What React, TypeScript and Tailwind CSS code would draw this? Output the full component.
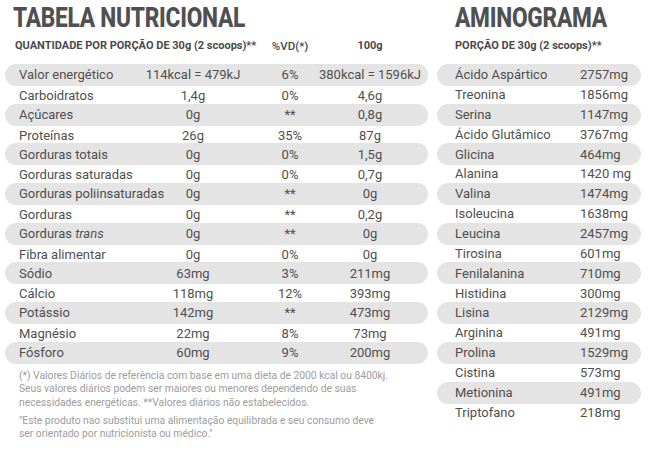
const font = { fontFamily: "Roboto, 'Liberation Sans', sans-serif" };

type NutRow = { label: React.ReactNode; portion: string; vd: string; per100: string };

const nutrition: NutRow[] = [
  { label: "Valor energético", portion: "114kcal = 479kJ", vd: "6%", per100: "380kcal = 1596kJ" },
  { label: "Carboidratos", portion: "1,4g", vd: "0%", per100: "4,6g" },
  { label: "Açúcares", portion: "0g", vd: "**", per100: "0,8g" },
  { label: "Proteínas", portion: "26g", vd: "35%", per100: "87g" },
  { label: "Gorduras totais", portion: "0g", vd: "0%", per100: "1,5g" },
  { label: "Gorduras saturadas", portion: "0g", vd: "0%", per100: "0,7g" },
  { label: "Gorduras poliinsaturadas", portion: "0g", vd: "**", per100: "0g" },
  { label: "Gorduras", portion: "0g", vd: "**", per100: "0,2g" },
  {
    label: (
      <>
        Gorduras <i>trans</i>
      </>
    ),
    portion: "0g",
    vd: "**",
    per100: "0g",
  },
  { label: "Fibra alimentar", portion: "0g", vd: "0%", per100: "0g" },
  { label: "Sódio", portion: "63mg", vd: "3%", per100: "211mg" },
  { label: "Cálcio", portion: "118mg", vd: "12%", per100: "393mg" },
  { label: "Potássio", portion: "142mg", vd: "**", per100: "473mg" },
  { label: "Magnésio", portion: "22mg", vd: "8%", per100: "73mg" },
  { label: "Fósforo", portion: "60mg", vd: "9%", per100: "200mg" },
];

const aminos: [string, string][] = [
  ["Ácido Aspártico", "2757mg"],
  ["Treonina", "1856mg"],
  ["Serina", "1147mg"],
  ["Ácido Glutâmico", "3767mg"],
  ["Glicina", "464mg"],
  ["Alanina", "1420 mg"],
  ["Valina", "1474mg"],
  ["Isoleucina", "1638mg"],
  ["Leucina", "2457mg"],
  ["Tirosina", "601mg"],
  ["Fenilalanina", "710mg"],
  ["Histidina", "300mg"],
  ["Lisina", "2129mg"],
  ["Arginina", "491mg"],
  ["Prolina", "1529mg"],
  ["Cistina", "573mg"],
  ["Metionina", "491mg"],
  ["Triptofano", "218mg"],
];

function Cell({ children }: { children: React.ReactNode }) {
  return <div className="flex justify-center whitespace-nowrap">{children}</div>;
}

function NutritionTable() {
  return (
    <div className="ml-[5px] w-[423px]">
      <div className="pl-[8px] pt-[3px] h-[34px]">
        <h1 className="inline-block origin-left scale-x-[0.84] whitespace-nowrap text-[27px] leading-[30px] font-extrabold tracking-[-0.3px] text-[#505052]">
          TABELA NUTRICIONAL
        </h1>
      </div>
      <div className="grid grid-cols-[136px_104px_90px_70px] items-center h-[30px] pb-[5px] text-[11px] font-bold text-[#4a4a4a]">
        <div className="pl-[10px] whitespace-nowrap">QUANTIDADE POR PORÇÃO DE 30g (2 scoops)**</div>
        <div />
        <Cell>
          <span className="text-[11.5px] font-medium">%VD(*)</span>
        </Cell>
        <Cell>100g</Cell>
      </div>
      <div className="text-[13px] text-[#4f4f4f]">
        {nutrition.map((r, i) => (
          <div
            key={i}
            className={
              i % 2 === 0
                ? "grid grid-cols-[136px_104px_90px_70px] items-center h-[22px] rounded-full bg-[#e4e4e4]"
                : "grid grid-cols-[136px_104px_90px_70px] items-center h-[17.7px]"
            }
          >
            <div className="pl-[14px] whitespace-nowrap">{r.label}</div>
            <Cell>{r.portion}</Cell>
            <Cell>{r.vd}</Cell>
            <Cell>{r.per100}</Cell>
          </div>
        ))}
      </div>
      <div className="pl-[14px] pt-[5px] text-[10.3px] leading-[13.5px] text-[#9d9d9d] whitespace-nowrap">
        <p>
          (*) Valores Diários de referência com base em uma dieta de 2000 kcal ou 8400kj.
          <br />
          Seus valores diários podem ser maiores ou menores dependendo de suas
          <br />
          necessidades energéticas. **Valores diários não estabelecidos.
        </p>
        <p className="mt-[4.5px]">
          "Este produto nao substitui uma alimentação equilibrada e seu consumo deve
          <br />
          ser orientado por nutricionista ou médico."
        </p>
      </div>
    </div>
  );
}

function AminoTable() {
  return (
    <div className="ml-[9px] w-[204px]">
      <div className="pl-[18px] pt-[3px] h-[34px]">
        <h2 className="inline-block origin-left scale-x-[0.84] whitespace-nowrap text-[27px] leading-[30px] font-extrabold tracking-[-0.3px] text-[#505052]">
          AMINOGRAMA
        </h2>
      </div>
      <div className="flex items-center h-[30px] pb-[5px] pl-[18px] text-[11px] font-bold text-[#4a4a4a] whitespace-nowrap">
        PORÇÃO DE 30g (2 scoops)**
      </div>
      <div className="text-[13px] text-[#4f4f4f]">
        {aminos.map(([name, value], i) => (
          <div
            key={name}
            className={
              i % 2 === 0
                ? "flex items-center h-[22px] rounded-full bg-[#e4e4e4] pl-[18px]"
                : "flex items-center h-[17.7px] pl-[18px]"
            }
          >
            <div className="w-[125px] whitespace-nowrap">{name}</div>
            <div className="whitespace-nowrap">{value}</div>
          </div>
        ))}
      </div>
    </div>
  );
}

export default function App() {
  return (
    <div className="w-[650px] h-[451px] bg-white overflow-hidden flex" style={font}>
      <NutritionTable />
      <AminoTable />
    </div>
  );
}
